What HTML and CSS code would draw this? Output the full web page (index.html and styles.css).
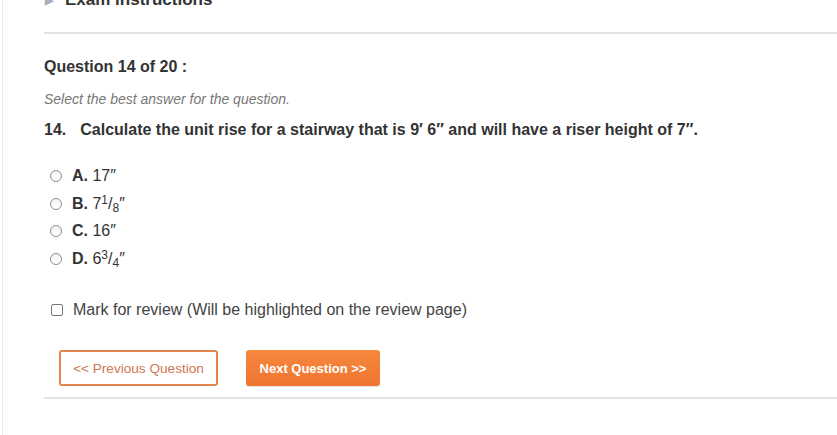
FILE: index.html
```html
<!DOCTYPE html>
<html>
<head>
<meta charset="utf-8">
<link rel="stylesheet" href="styles.css">
</head>
<body>
<div class="page">
  <div class="content">
    <div class="section-title"><span class="tri">&#9654;</span><span>Exam instructions</span></div>
    <div class="rule"></div>
    <div class="q-header">Question 14 of 20 :</div>
    <div class="instruction">Select the best answer for the question.</div>
    <div class="question"><span class="qnum">14.</span>Calculate the unit rise for a stairway that is 9&prime; 6&Prime; and will have a riser height of 7&Prime;.</div>
    <div class="options">
      <label class="option"><input type="radio" name="a" class="radio"><span><b>A.</b> 17&Prime;</span></label>
      <label class="option"><input type="radio" name="a" class="radio"><span><b>B.</b> 7<sup>1</sup>/<sub>8</sub>&Prime;</span></label>
      <label class="option"><input type="radio" name="a" class="radio"><span><b>C.</b> 16&Prime;</span></label>
      <label class="option"><input type="radio" name="a" class="radio"><span><b>D.</b> 6<sup>3</sup>/<sub>4</sub>&Prime;</span></label>
    </div>
    <label class="mark"><input type="checkbox" class="check"><span>Mark for review (Will be highlighted on the review page)</span></label>
    <div class="buttons">
      <button class="btn btn-prev">&lt;&lt; Previous Question</button>
      <button class="btn btn-next">Next Question &gt;&gt;</button>
    </div>
    <div class="rule rule-bottom"></div>
  </div>
</div>
</body>
</html>
```

FILE: styles.css
```css
html, body {
  margin: 0;
  padding: 0;
  background: #ffffff;
  overflow: hidden;
}
body {
  font-family: "Liberation Sans", Arial, sans-serif;
  color: #333333;
}
.page {
  margin-left: 2px;
  border-left: 1px solid #ebebeb;
  min-height: calc(100vh + 20px);
}
.content {
  padding-left: 41px;
}
.section-title {
  margin-top: -10px;
  height: 20px;
  line-height: 20px;
  font-size: 17px;
  font-weight: bold;
  display: flex;
  align-items: center;
}
.tri {
  color: #a9b0bb;
  font-size: 11px;
  width: 20px;
  margin-left: 1px;
}
.rule {
  height: 2px;
  background: #e2e2e2;
  margin-top: 22px;
}
.q-header {
  margin-top: 23px;
  font-size: 16px;
  font-weight: bold;
  line-height: 20px;
}
.instruction {
  margin-top: 12px;
  font-size: 14px;
  font-style: italic;
  color: #777777;
  line-height: 20px;
}
.question {
  margin-top: 11px;
  font-size: 16px;
  font-weight: bold;
  line-height: 20px;
}
.qnum {
  margin-right: 14px;
}
.options {
  margin-top: 26px;
  display: flex;
  flex-direction: column;
  gap: 7.7px;
  padding-left: 6px;
}
.option {
  display: flex;
  align-items: center;
  font-size: 16px;
  line-height: 20px;
  color: #333;
}
.option b {
  font-weight: bold;
}
.radio {
  appearance: none;
  -webkit-appearance: none;
  width: 12px;
  height: 12px;
  margin: 0 10px 0 0;
  border: 1px solid #8e8e8e;
  border-radius: 50%;
  background: linear-gradient(#f4f4f4, #ffffff);
  box-sizing: border-box;
}
sup, sub {
  font-size: 12px;
  line-height: 0;
  position: relative;
  vertical-align: baseline;
}
sup { top: -5px; }
sub { top: 3px; }
.mark {
  margin-top: 31px;
  display: flex;
  align-items: center;
  font-size: 16px;
  line-height: 20px;
  color: #444;
  padding-left: 7px;
}
.check {
  appearance: none;
  -webkit-appearance: none;
  width: 12px;
  height: 12px;
  margin: 0 10px 0 0;
  border: 1px solid #777;
  border-radius: 2px;
  background: #fff;
  box-sizing: border-box;
}
.buttons {
  margin-top: 30px;
  display: flex;
  gap: 28px;
  padding-left: 15px;
}
.btn {
  height: 36px;
  font-family: "Liberation Sans", Arial, sans-serif;
  font-size: 13px;
  border-radius: 3px;
  box-sizing: border-box;
  cursor: pointer;
  padding: 0;
}
.btn-prev {
  width: 159px;
  background: #ffffff;
  border: 2px solid #e0864d;
  color: #cf7650;
  font-size: 13.6px;
}
.btn-next {
  width: 134px;
  border: none;
  background: linear-gradient(#f7883e, #ef7530);
  color: #ffffff;
  font-weight: bold;
  box-shadow: 0 1px 1px rgba(0,0,0,0.12);
}
.rule-bottom {
  margin-top: 11px;
  background: #e0e3e6;
}
```
